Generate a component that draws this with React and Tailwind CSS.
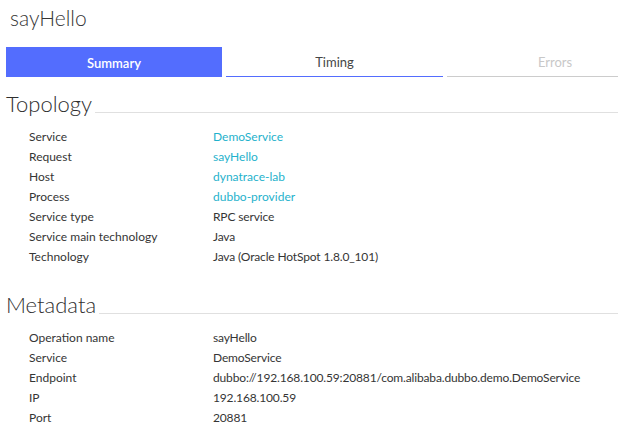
import React from "react";

const topology = [
  ["Service", "DemoService", true],
  ["Request", "sayHello", true],
  ["Host", "dynatrace-lab", true],
  ["Process", "dubbo-provider", true],
  ["Service type", "RPC service"],
  ["Service main technology", "Java"],
  ["Technology", "Java (Oracle HotSpot 1.8.0_101)"],
];

const metadata = [
  ["Operation name", "sayHello"],
  ["Service", "DemoService"],
  ["Endpoint", "dubbo://192.168.100.59:20881/com.alibaba.dubbo.demo.DemoService"],
  ["IP", "192.168.100.59"],
  ["Port", "20881"],
];

const Section = ({ title, rows }) => (
  <div>
    <div className="flex items-end gap-[3px]">
      <h2 className="text-[22px] leading-[26px] font-light text-[#2f2f2f] whitespace-nowrap">{title}</h2>
      <div className="flex-1 h-px bg-[#e0e0e0] mb-[4px]" />
    </div>
    <div className="mt-[10px] pl-[23px]">
      {rows.map(([label, value, link]) => (
        <div key={label} className="flex h-[20px] items-center text-[12px]">
          <div className="w-[184px] text-[#353535]">{label}</div>
          <div className={link ? "text-[#1fb2cc]" : "text-[#353535] tracking-[-0.15px]"}>{value}</div>
        </div>
      ))}
    </div>
  </div>
);

export default function App() {
  return (
    <div
      className="w-[618px] h-[442px] overflow-hidden bg-white"
      style={{ fontFamily: "Lato, 'Noto Sans', sans-serif" }}
    >
      <h1 className="pl-[10px] pt-[5px] text-[21px] leading-[26px] font-light text-[#353535]">sayHello</h1>
      <div className="flex gap-[4px] pl-[6px] mt-[16px]">
        <div className="w-[216px] h-[30px] pt-[3px] shrink-0 bg-[#536dfe] text-white text-[13px] font-semibold flex items-center justify-center">
          Summary
        </div>
        <div className="w-[217px] h-[30px] pt-[3px] shrink-0 border-b border-[#536dfe] text-[#454646] text-[13px] flex items-center justify-center">
          Timing
        </div>
        <div className="w-[216px] h-[30px] pt-[3px] shrink-0 border-b border-[#cccccc] text-[#c8c8c8] text-[13px] flex items-center justify-center">
          Errors
        </div>
      </div>
      <div className="pl-[6px] mt-[14px]">
        <Section title="Topology" rows={topology} />
        <div className="mt-[25px]">
          <Section title="Metadata" rows={metadata} />
        </div>
      </div>
    </div>
  );
}
